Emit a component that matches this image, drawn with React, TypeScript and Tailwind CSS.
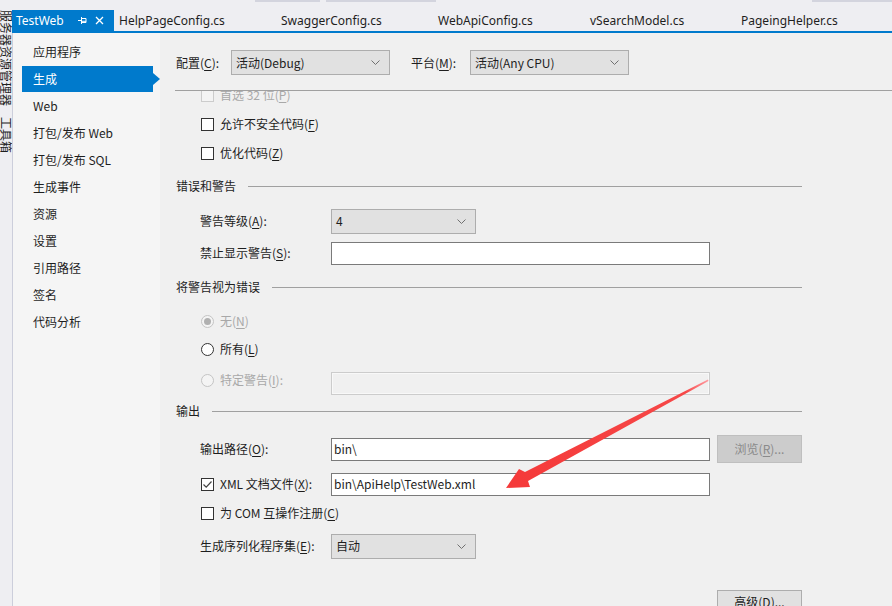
import React from "react";

const CJK = '"Noto Sans CJK SC", "Noto Sans", sans-serif';
const LAT = '"Noto Sans", "Noto Sans CJK SC", sans-serif';

function M({ c }: { c: string }) {
  return <span className="underline decoration-1 underline-offset-[2px]">{c}</span>;
}

function Chevron() {
  return (
    <svg width="9" height="5" viewBox="0 0 9 5" className="shrink-0">
      <polyline points="0.5,0.5 4.5,4.5 8.5,0.5" fill="none" stroke="#707070" strokeWidth="1" />
    </svg>
  );
}

function Box({ checked = false, disabled = false }: { checked?: boolean; disabled?: boolean }) {
  return (
    <div
      className={
        disabled
          ? "w-[13px] h-[13px] shrink-0 border border-[#cccccc] bg-[#f4f4f4] flex items-center justify-center"
          : "w-[13px] h-[13px] shrink-0 border border-[#333333] bg-white flex items-center justify-center"
      }
    >
      {checked && (
        <svg width="11" height="11" viewBox="0 0 11 11">
          <polyline points="1.5,5.5 4.2,8.2 9.5,2.5" fill="none" stroke="#444444" strokeWidth="1.2" />
        </svg>
      )}
    </div>
  );
}

function Radio({ checked = false, disabled = false }: { checked?: boolean; disabled?: boolean }) {
  return (
    <div
      className={
        disabled
          ? "w-[13px] h-[13px] shrink-0 rounded-full border border-[#c4c4c4] bg-[#f4f4f4] flex items-center justify-center"
          : "w-[13px] h-[13px] shrink-0 rounded-full border border-[#333333] bg-white flex items-center justify-center"
      }
    >
      {checked && <div className="w-[7px] h-[7px] rounded-full bg-[#b0b0b0]" />}
    </div>
  );
}

function Header({ text, h }: { text: string; h: string }) {
  return (
    <div className={`${h} flex items-center gap-[12px]`}>
      <span className="text-[#1e1e1e]">{text}</span>
      <div className="flex-1 h-px bg-[#a0a0a0]" />
    </div>
  );
}

const navItems = [
  "应用程序",
  "生成",
  "Web",
  "打包/发布 Web",
  "打包/发布 SQL",
  "生成事件",
  "资源",
  "设置",
  "引用路径",
  "签名",
  "代码分析",
];

const tabs: { t: string; w: string }[] = [
  { t: "HelpPageConfig.cs", w: "w-[162px]" },
  { t: "SwaggerConfig.cs", w: "w-[157px]" },
  { t: "WebApiConfig.cs", w: "w-[152px]" },
  { t: "vSearchModel.cs", w: "w-[151px]" },
  { t: "PageingHelper.cs", w: "w-[140px]" },
];

export default function App() {
  return (
    <div
      className="relative w-[892px] h-[606px] overflow-hidden flex bg-[#eeeef2] text-[12px] leading-[16px] text-[#1e1e1e]"
      style={{ fontFamily: CJK }}
    >
      {/* left auto-hide strip */}
      <div className="w-[12px] shrink-0 overflow-hidden flex flex-col pt-[10px]">
        <div className="-ml-[1px] text-[12px] leading-[12px] text-[#1e1e1e] [writing-mode:vertical-rl] [text-orientation:sideways]">
          服务器资源管理器
        </div>
        <div className="-ml-[1px] mt-[11px] text-[12px] leading-[12px] text-[#1e1e1e] [writing-mode:vertical-rl] [text-orientation:sideways]">
          工具箱
        </div>
      </div>

      {/* right column */}
      <div className="flex-1 flex flex-col min-w-0">
        {/* tab strip */}
        <div className="h-[31px] shrink-0 flex flex-col">
          <div className="h-[2px] flex">
            <div className="w-[243px]" />
            <div className="w-[65px] bg-[#d3d4de]" />
            <div className="w-[6px]" />
            <div className="w-[110px] bg-[#d3d4de]" />
            <div className="w-[376px]" />
            <div className="flex-1 bg-[#d3d4de]" />
          </div>
          <div className="h-[8px]" />
          <div className="h-[21px] flex items-center" style={{ fontFamily: LAT }}>
            <div className="w-[102px] h-full bg-[#007acc] text-white flex items-center pl-[4px]">
              <span className="text-[12px]">TestWeb</span>
              <svg width="9" height="9" viewBox="0 0 9 9" className="ml-[14px]">
                <path d="M0 4.5h3.5M3.5 1v7M3.5 2.5h4.5v4h-4.5M3.5 5.3h4.5" fill="none" stroke="white" strokeWidth="1" />
              </svg>
              <svg width="9" height="9" viewBox="0 0 9 9" className="ml-[8px]">
                <path d="M1 1l7 7M8 1l-7 7" stroke="white" strokeWidth="1.3" />
              </svg>
            </div>
            {tabs.map((t) => (
              <div key={t.t} className={`${t.w} h-full flex items-center pl-[5px] text-[12px] text-[#1e1e1e]`}>
                {t.t}
              </div>
            ))}
          </div>
        </div>
        <div className="h-[2px] shrink-0 bg-[#007acc]" />

        {/* body */}
        <div className="flex-1 flex min-h-0">
          {/* sidebar */}
          <div className="w-[148px] shrink-0 border-l border-[#cccedb] bg-[#f5f5f5] pt-[5px] pl-[9px]">
            {navItems.map((n) =>
              n === "生成" ? (
                <div key={n} className="h-[27px] flex items-center">
                  <div className="w-[131px] h-[26px] bg-[#007acc] text-white flex items-center pl-[11px]">{n}</div>
                  <div className="w-0 h-0 border-y-[6px] border-y-transparent border-l-[7px] border-l-[#007acc]" />
                </div>
              ) : (
                <div key={n} className="h-[27px] flex items-center pl-[11px]">
                  {n}
                </div>
              )
            )}
          </div>

          {/* main */}
          <div className="flex-1 bg-[#f0f0f0] flex flex-col min-w-0">
            <div className="h-[57px] shrink-0 flex items-start pl-[16px] pt-[17px]">
              <div className="w-[55px] h-[25px] flex items-center">
                配置(<M c="C" />):
              </div>
              <div className="w-[159px] h-[25px] bg-[#e1e1e1] border border-[#adadad] flex items-center justify-between pl-[4px] pr-[9px]">
                <span>活动(Debug)</span>
                <Chevron />
              </div>
              <div className="w-[59px] ml-[21px] h-[25px] flex items-center">
                平台(<M c="M" />):
              </div>
              <div className="w-[159px] h-[25px] bg-[#e1e1e1] border border-[#adadad] flex items-center justify-between pl-[4px] pr-[9px]">
                <span>活动(Any CPU)</span>
                <Chevron />
              </div>
            </div>
            <div className="h-px shrink-0 ml-[15px] bg-[#a0a0a0]" />

            <div className="flex-1 overflow-hidden">
              <div className="-mt-[10px] ml-[16px] w-[626px] flex flex-col">
                {/* 首选 32 位 (clipped, disabled) */}
                <div className="h-[28px] flex items-center pl-[25px] text-[#a8a8a8]">
                  <Box disabled />
                  <span className="ml-[6px]">
                    首选 32 位(<M c="P" />)
                  </span>
                </div>
                <div className="h-[30px] flex items-center pl-[25px]">
                  <Box />
                  <span className="ml-[6px]">
                    允许不安全代码(<M c="F" />)
                  </span>
                </div>
                <div className="h-[28px] flex items-center pl-[25px]">
                  <Box />
                  <span className="ml-[6px]">
                    优化代码(<M c="Z" />)
                  </span>
                </div>

                <Header text="错误和警告" h="h-[38px]" />

                <div className="h-[32px] flex items-center">
                  <div className="w-[155px] pl-[24px]">
                    警告等级(<M c="A" />):
                  </div>
                  <div className="w-[145px] h-[25px] bg-[#e1e1e1] border border-[#adadad] flex items-center justify-between pl-[4px] pr-[9px]">
                    <span>4</span>
                    <Chevron />
                  </div>
                </div>
                <div className="h-[32px] flex items-center">
                  <div className="w-[155px] pl-[24px]">
                    禁止显示警告(<M c="S" />):
                  </div>
                  <div className="w-[379px] h-[23px] bg-white border border-[#7a7a7a]" />
                </div>

                <Header text="将警告视为错误" h="h-[36px]" />

                <div className="h-[32px] flex items-center pl-[25px] text-[#a8a8a8]">
                  <Radio checked disabled />
                  <span className="ml-[6px]">
                    无(<M c="N" />)
                  </span>
                </div>
                <div className="h-[24px] flex items-center pl-[25px]">
                  <Radio />
                  <span className="ml-[6px]">
                    所有(<M c="L" />)
                  </span>
                </div>
                <div className="h-[38px] flex items-center">
                  <div className="w-[155px] pl-[25px] flex items-center text-[#a8a8a8]">
                    <Radio disabled />
                    <span className="ml-[6px]">
                      特定警告(<M c="I" />):
                    </span>
                  </div>
                  <div className="w-[379px] h-[23px] mt-[6px] bg-[#f0f0f0] border border-[#cccccc] shadow-[inset_0_0_0_1px_#f8f8f8]" />
                </div>

                <Header text="输出" h="h-[24px]" />

                <div className="h-[52px] flex items-center">
                  <div className="w-[155px] pl-[24px]">
                    输出路径(<M c="O" />):
                  </div>
                  <div className="w-[379px] h-[23px] bg-white border border-[#7a7a7a] flex items-center pl-[2px]">bin\</div>
                  <div className="ml-[7px] w-[85px] h-[28px] bg-[#cccccc] border border-[#bfbfbf] text-[#8a8a8a] flex items-center justify-center">
                    浏览(<M c="R" />)...
                  </div>
                </div>
                <div className="h-[18px] flex items-center">
                  <div className="w-[155px] pl-[25px] flex items-center">
                    <Box checked />
                    <span className="ml-[6px]">
                      XML 文档文件(<M c="X" />):
                    </span>
                  </div>
                  <div className="w-[379px] h-[23px] shrink-0 bg-white border border-[#7a7a7a] flex items-center pl-[2px]">
                    bin\ApiHelp\TestWeb.xml
                  </div>
                </div>
                <div className="h-[40px] flex items-center pl-[25px]">
                  <Box />
                  <span className="ml-[6px]">
                    为 COM 互操作注册(<M c="C" />)
                  </span>
                </div>
                <div className="h-[26px] flex items-center">
                  <div className="w-[155px] pl-[24px]">
                    生成序列化程序集(<M c="E" />):
                  </div>
                  <div className="w-[145px] h-[25px] shrink-0 bg-[#e1e1e1] border border-[#adadad] flex items-center justify-between pl-[4px] pr-[9px]">
                    <span>自动</span>
                    <Chevron />
                  </div>
                </div>
                <div className="h-[31px]" />
                <div className="flex pl-[541px]">
                  <div className="w-[85px] h-[24px] bg-[#e1e1e1] border border-[#adadad] flex items-center justify-center">
                    高级(<M c="D" />)...
                  </div>
                </div>
              </div>
            </div>
          </div>
        </div>
      </div>

      {/* red annotation arrow */}
      <svg className="absolute left-0 top-0 pointer-events-none" width="892" height="606" viewBox="0 0 892 606">
        <defs>
          <linearGradient id="ag" x1="708" y1="380" x2="520" y2="480" gradientUnits="userSpaceOnUse">
            <stop offset="0" stopColor="#ff9aa0" />
            <stop offset="0.12" stopColor="#f64848" />
            <stop offset="1" stopColor="#f53a3a" />
          </linearGradient>
        </defs>
        <polygon
          points="708,379.5 525,472 519,469 506,488 530,487 528,481 708.5,381"
          fill="url(#ag)"
        />
      </svg>
    </div>
  );
}
